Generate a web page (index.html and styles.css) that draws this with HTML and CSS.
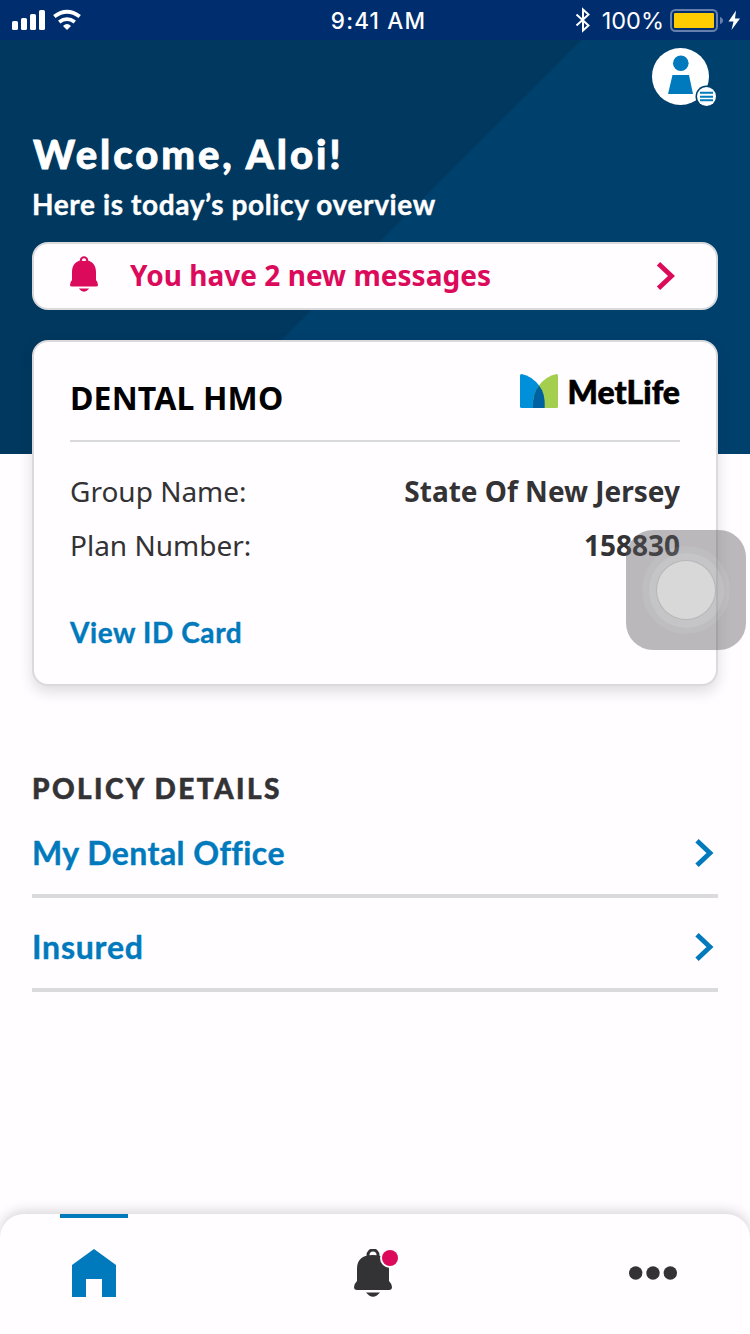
FILE: index.html
```html
<!DOCTYPE html>
<html lang="en">
<head>
<meta charset="utf-8">
<title>Policy overview</title>
<link rel="stylesheet" href="styles.css">
</head>
<body>
<div class="app">
  <div class="status">
    <div class="status-left">
      <svg width="72" height="24" viewBox="0 0 72 24" fill="#fff">
        <rect x="0" y="13" width="6" height="9" rx="1.6"/><rect x="9" y="10" width="6" height="12" rx="1.6"/><rect x="18" y="6" width="6" height="16" rx="1.6"/><rect x="27" y="2" width="6" height="20" rx="1.6"/>
        <g fill="none" stroke="#fff" stroke-width="3.8"><path d="M42.3 8.6Q55 -1.1 67.7 8.6"/><path d="M47.2 14Q55 8.200 62.8 14"/></g>
        <path d="M51 18Q55 14.200 59 18L55 22Z"/>
      </svg>
    </div>
    <div class="time">9:41 AM</div>
    <div class="status-right">
      <svg width="16" height="26" viewBox="0 0 16 26" fill="none" stroke="#fff" stroke-width="2"><path d="M1.500 7.500L13.500 18.500L8 23.500V2.500L13.500 7.500L1.500 18.500"/></svg>
      <span class="percent">100%</span>
      <svg class="battery" width="71" height="26" viewBox="0 0 71 26"><rect x="1" y="3" width="46" height="21" rx="4.500" fill="none" stroke="#6680ad" stroke-width="2"/><rect x="4" y="6" width="40" height="15" rx="1" fill="#fc0"/><path d="M50 10Q53 11 53 13.500T50 17Z" fill="#6680ad"/><path d="M66 3.500L58.500 14.500H63.500L61.500 23L70 11.500H65Z" fill="#fff"/></svg>
    </div>
  </div>
  <header class="hero">
    <svg class="profile" width="66" height="62" viewBox="0 0 66 62">
      <circle cx="28.500" cy="28.500" r="28.500" fill="#fff"/>
      <circle cx="28.800" cy="15.300" r="7.800" fill="#007abc"/><path d="M20.500 27H37L41 46H16Z" fill="#007abc"/>
      <circle cx="54.500" cy="48.500" r="11" fill="#00406d"/><circle cx="54.500" cy="48.500" r="9.500" fill="#fff"/>
      <path d="M48 44.800H61M48 48.800H61M48 52.300H61" stroke="#007abc" stroke-width="1.900"/>
    </svg>
    <h1 class="welcome">Welcome, Aloi!</h1>
    <p class="sub">Here is today’s policy overview</p>
    <div class="messages">
      <svg class="bell" width="28" height="36" viewBox="0 0 28 36" fill="#db0a5b"><circle cx="14" cy="4.500" r="3.200" fill="none" stroke="#db0a5b" stroke-width="2"/><path d="M2 16C2 8 7 4 14 4S26 8 26 16V24Q28 26 28 29Q28 30.500 26 30.500H2Q0 30.500 0 29Q0 26 2 24ZM8.800 32.500H19.200Q14 39 8.800 32.500Z"/><path d="M11.500 5Q14 2 16.500 5Z" fill="#fff"/></svg>
      <span class="msg-text">You have 2 new messages</span>
      <svg width="20" height="30" viewBox="0 0 20 30" fill="none" stroke="#db0a5b" stroke-width="4.800"><path d="M2.500 2.700L15.500 15L2.500 27.300"/></svg>
    </div>
  </header>
  <section class="card">
    <div class="card-head">
      <h2 class="plan">DENTAL HMO</h2>
      <div class="brand">
        <svg width="38" height="34" viewBox="0 0 38 34"><path d="M0 1.500Q0 0 1.500 0Q12 2 19.500 12Q25 20 24.500 34H1.500Q0 34 0 32.500Z" fill="#0090da"/><path d="M38 1.500Q38 0 36.500 0Q26 2 18.500 12Q12 21 13 34H36.500Q38 34 38 32.500Z" fill="#a4ce4e"/><path d="M19 11.500Q25.500 19 24.700 34H13Q12 20 19 11.500Z" fill="#0061a0"/></svg>
        <span class="brand-name">MetLife</span>
      </div>
    </div>
    <div class="row"><span>Group Name:</span><b>State Of New Jersey</b></div>
    <div class="row"><span>Plan Number:</span><b>158830</b></div>
    <a class="id-link">View ID Card</a>
  </section>
  <section class="details">
    <h3 class="details-title">POLICY DETAILS</h3>
    <div class="item item-first"><span class="office">My Dental Office</span><svg width="20" height="30" viewBox="0 0 20 30" fill="none" stroke="#007abc" stroke-width="4.800"><path d="M2 2.700L15 15L2 27.300"/></svg></div>
    <div class="item"><span class="insured">Insured</span><svg width="20" height="30" viewBox="0 0 20 30" fill="none" stroke="#007abc" stroke-width="4.800"><path d="M2 2.700L15 15L2 27.300"/></svg></div>
  </section>
  <nav class="tabs">
    <div class="tab tab-active"><svg width="44" height="48" viewBox="0 0 44 48"><path d="M22 0L44 16V48H30V30H14V48H0V16Z" fill="#007abc"/></svg></div>
    <div class="tab tab-bell"><svg width="46" height="50" viewBox="0 0 46 50" fill="#333235"><circle cx="19" cy="6" r="5" fill="none" stroke="#333235" stroke-width="3"/><path d="M3 20C3 10 9 6 19 6S35 10 35 20V32Q38 35 38 38Q38 41 35 41H3Q0 41 0 38Q0 35 3 32ZM12 43.500H26Q19 52 12 43.500Z"/><path d="M15.500 5.500Q19 2 22.500 5.500Z" fill="#fff"/><circle cx="36" cy="9" r="10" fill="#fffdff"/><circle cx="36" cy="9" r="8" fill="#db0a5b"/></svg></div>
    <div class="tab tab-more"><svg width="48" height="14" viewBox="0 0 48 14" fill="#333235"><circle cx="6.700" cy="7" r="6.700"/><circle cx="24" cy="7" r="6.700"/><circle cx="41.300" cy="7" r="6.700"/></svg></div>
  </nav>
  <div class="touch"><div class="ring ring-outer"><div class="ring ring-mid"><div class="ring ring-inner"></div></div></div></div>
</div>
</body>
</html>
```
FILE: styles.css
```css
* { box-sizing: border-box; margin: 0; padding: 0; }
body { background: #fffdff; font-family: "Noto Sans", sans-serif; }
svg { display: block; flex: none; }
.app { position: relative; width: 750px; height: 1334px; display: flex; flex-direction: column; overflow: hidden; }
.status { height: 40px; background: #002d6e; color: #fff; display: grid; grid-template-columns: 1fr auto 1fr; grid-template-rows: 40px; align-items: center; padding: 0 9px 0 12px; font: 24px/30px Inter, sans-serif; flex: none; }
.time { font-weight: 500; font-size: 22.500px; letter-spacing: 1.200px; padding: 2px 0 0 4px; }
.status-right { display: flex; justify-content: flex-end; align-items: center; }
.percent { margin-left: 11px; font-size: 23.500px; padding-top: 2px; }
.battery { margin-left: 6px; }
.hero { height: 414px; flex: none; padding: 8px 32px 0; background: linear-gradient(135deg, #00385f 50%, #00406d 50%); color: #fff; display: flex; flex-direction: column; }
.profile { align-self: flex-end; }
.welcome { font: 900 40px/48px Lato, sans-serif; letter-spacing: 2.950px; margin: 20px 0 0 1px; white-space: nowrap; -webkit-text-stroke: 0.800px; }
.sub { font: 700 28px/36px Lato, sans-serif; letter-spacing: 0.620px; margin-top: 8px; white-space: nowrap; -webkit-text-stroke: 0.400px; }
.messages { height: 68px; margin-top: 20px; border: 2px solid #dad9db; border-radius: 16px; background: #fffdff; display: flex; align-items: center; padding: 0 40px 0 36px; }
.bell { margin-top: -4px; }
.msg-text { flex: 1; margin-left: 32px; font-weight: 700; font-size: 28px; letter-spacing: 0.030px; color: #db0a5b; margin-top: -2px; }
.card { height: 346px; flex: none; margin: -114px 32px 0; padding: 0 36px; border: 2px solid #dad9db; border-radius: 16px; background: #fffdff; box-shadow: 0 6px 14px rgba(40, 35, 45, 0.150); color: #333235; }
.card-head { height: 100px; border-bottom: 2px solid #d9d8da; display: flex; justify-content: space-between; padding-top: 32px; margin-bottom: 22px; }
.plan { font-size: 32px; line-height: 48px; letter-spacing: 0.150px; color: #000; }
.brand { display: flex; align-items: flex-start; gap: 10px; }
.brand-name { font: 900 32px/36px Lato, sans-serif; color: #000; -webkit-text-stroke: 0.600px; }
.row { display: flex; justify-content: space-between; font-size: 28px; line-height: 54px; }
.id-link { display: block; font: 700 28px/36px Lato, sans-serif; letter-spacing: 0.600px; color: #007abc; margin-top: 42px; -webkit-text-stroke: 0.400px; }
.details { margin: 84px 32px 0; }
.details-title { font: 900 28px/36px Lato, sans-serif; color: #333235; letter-spacing: 2.400px; -webkit-text-stroke: 0.500px; }
.item { height: 94px; border-bottom: 4px solid #dad9db; display: flex; justify-content: space-between; align-items: center; padding: 7px 3px 0 0; font: 700 32px/40px Lato, sans-serif; color: #007abc; -webkit-text-stroke: 0.400px; }
.item-first { height: 92px; padding-top: 6px; }
.office { letter-spacing: 0.460px; }
.insured { letter-spacing: 0.800px; }
.tabs { margin-top: auto; height: 120px; border-radius: 24px 24px 0 0; background: #fffdff; box-shadow: 0 -3px 12px rgba(40, 35, 45, 0.180); display: flex; justify-content: space-between; padding: 0 60px; }
.tab { padding-top: 35px; }
.tab-active { width: 68px; border-top: 4px solid #007abc; padding: 31px 12px 0; }
.tab-bell { margin-right: 3px; }
.tab-more { padding-top: 52px; margin-right: 13px; }
.touch { position: absolute; left: 626px; top: 530px; width: 120px; height: 120px; border-radius: 27px; background: rgba(90, 87, 92, 0.420); display: grid; place-items: center; }
.ring { border-radius: 50%; display: grid; place-items: center; }
.ring-outer { width: 88px; height: 88px; background: rgba(255, 255, 255, 0.070); }
.ring-mid { width: 75px; height: 75px; background: rgba(255, 255, 255, 0.110); }
.ring-inner { width: 58px; height: 58px; background: rgba(255, 255, 255, 0.340); box-shadow: 0 0 0 1px rgba(130, 128, 132, 0.200); }
```
